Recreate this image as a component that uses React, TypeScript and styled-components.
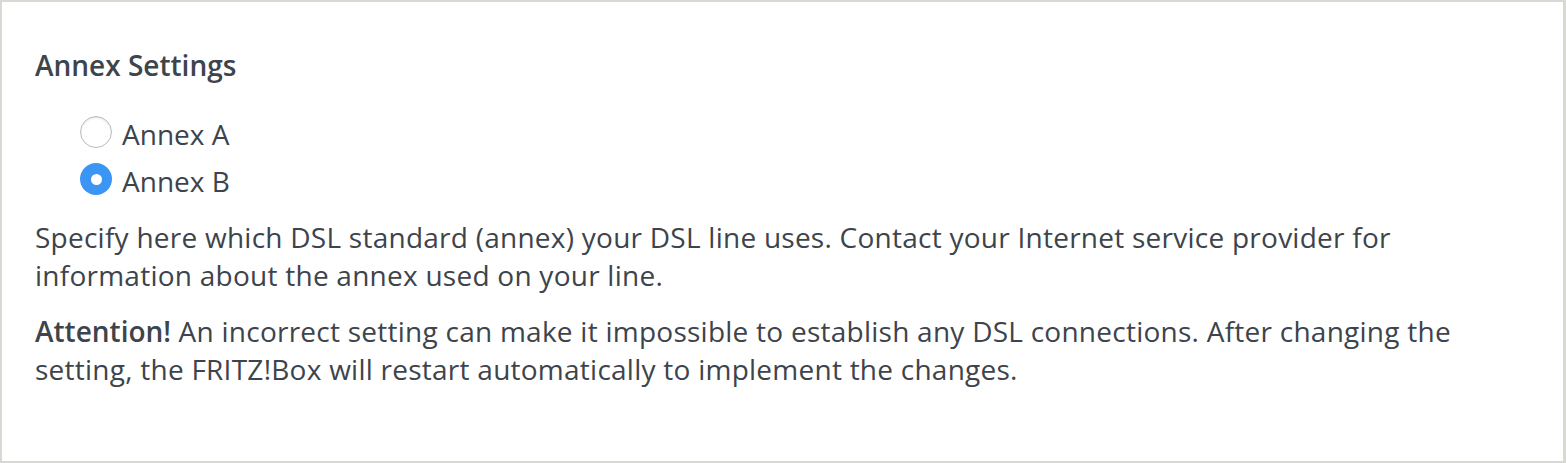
import React, { useState } from "react";
import styled, { createGlobalStyle } from "styled-components";

const GlobalStyle = createGlobalStyle`
  html, body {
    margin: 0;
    padding: 0;
    background: #ffffff;
  }
  body {
    font-family: "Open Sans", "Noto Sans", sans-serif;
    color: #3d444b;
  }
`;

const Frame = styled.div`
  box-sizing: border-box;
  width: 1566px;
  height: 463px;
  border: 2px solid #d9d9d4;
  border-right-width: 3px;
  padding: 44px 33px 0 33px;
  background: #fff;
`;

const Heading = styled.h2`
  margin: 0;
  font-size: 28px;
  line-height: 38px;
  font-weight: 600;
  color: #3d444b;
`;

const RadioList = styled.div`
  display: flex;
  flex-direction: column;
  gap: 9px;
  margin: 31px 0 0 45px;
`;

const RadioRow = styled.label`
  display: flex;
  align-items: flex-start;
  gap: 10px;
  font-size: 28px;
  line-height: 38px;
  cursor: pointer;
`;

const Dot = styled.span<{ $checked: boolean }>`
  box-sizing: border-box;
  width: 32px;
  height: 32px;
  margin-top: 1px;
  border-radius: 50%;
  flex-shrink: 0;
  display: flex;
  align-items: center;
  justify-content: center;
  background: ${(p) => (p.$checked ? "#3b95f4" : "#fff")};
  border: ${(p) => (p.$checked ? "none" : "1.5px solid #bdbdbd")};
  box-shadow: ${(p) =>
    p.$checked ? "none" : "inset 0 1px 2px rgba(0, 0, 0, 0.12)"};

  &::after {
    content: "";
    display: ${(p) => (p.$checked ? "block" : "none")};
    width: 11px;
    height: 11px;
    border-radius: 50%;
    background: #fff;
  }
`;

const Text = styled.p`
  margin: 0;
  font-size: 28px;
  line-height: 38px;
  letter-spacing: 0.25px;
`;

const Hint = styled(Text)`
  margin-top: 18px;
`;

const Warning = styled(Text)`
  margin-top: 18px;
`;

const Strong = styled.strong`
  font-weight: 600;
  letter-spacing: 0;
`;

const options = ["Annex A", "Annex B"];

export default function App() {
  const [annex, setAnnex] = useState("Annex B");

  return (
    <>
      <GlobalStyle />
      <Frame>
        <Heading>Annex Settings</Heading>
        <RadioList>
          {options.map((opt) => (
            <RadioRow key={opt} onClick={() => setAnnex(opt)}>
              <Dot $checked={annex === opt} />
              {opt}
            </RadioRow>
          ))}
        </RadioList>
        <Hint>
          Specify here which DSL standard (annex) your DSL line uses. Contact
          your Internet service provider for information about the annex used
          on your line.
        </Hint>
        <Warning>
          <Strong>Attention!</Strong> An incorrect setting can make it
          impossible to establish any DSL connections. After changing the
          setting, the FRITZ!Box will restart automatically to implement the
          changes.
        </Warning>
      </Frame>
    </>
  );
}
